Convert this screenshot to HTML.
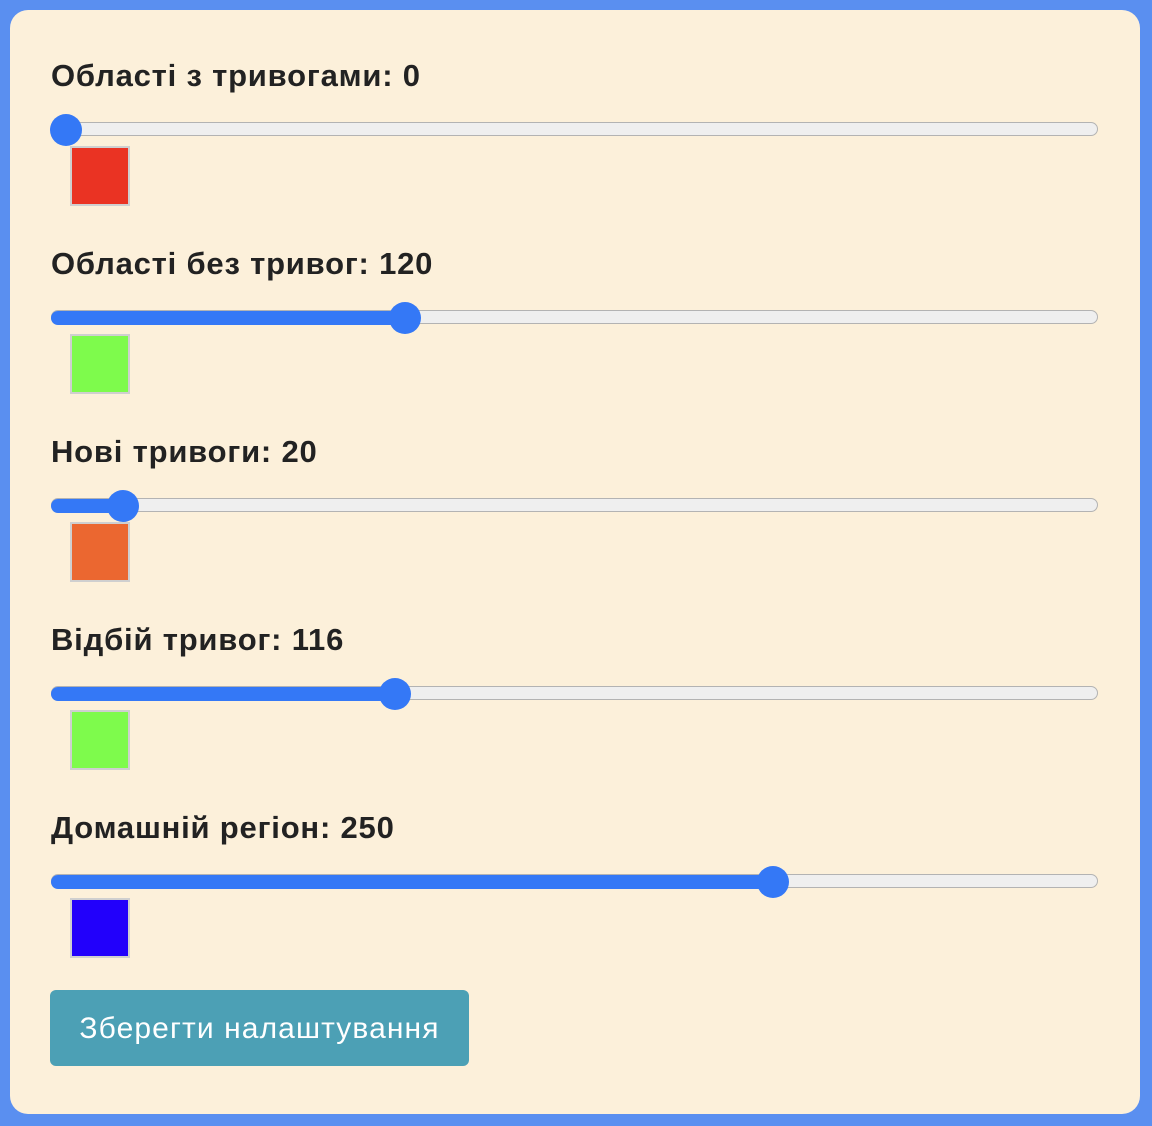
<!DOCTYPE html>
<html><head><meta charset="utf-8"><style>
html,body{margin:0;padding:0}
body{width:1152px;height:1126px;background:#5a8ff0;position:relative;overflow:hidden;font-family:"Liberation Sans","DejaVu Sans",sans-serif}
.card{position:absolute;left:10px;top:10px;width:1130px;height:1104px;background:#fcf0da;border-radius:18px}
.lbl{position:absolute;left:51px;font-size:31px;font-weight:bold;color:#222;line-height:1;letter-spacing:0.8px}
.track{position:absolute;left:51px;width:1045px;height:12px;background:#efefef;border:1px solid #b3b3b3;border-radius:7px}
.fill{position:absolute;left:51px;height:14px;background:#3478f6;border-radius:7px}
.thumb{position:absolute;width:32px;height:32px;border-radius:50%;background:#3478f6}
.sw{position:absolute;left:70px;width:56px;height:56px;border:2px solid #cfcfcf}
.btn{position:absolute;left:50px;top:990px;width:419px;height:76px;background:#4ca0b5;border-radius:6px;color:#fff;font-size:30px;line-height:78px;text-align:center;letter-spacing:1.1px}
</style></head><body><div class="card"></div>

<div class="lbl" style="top:60px">Області з тривогами: 0</div>
<div class="track" style="top:122px"></div>
<div class="thumb" style="left:50px;top:114px"></div>
<div class="sw" style="top:146px;background:#ea3323"></div>

<div class="lbl" style="top:248px">Області без тривог: 120</div>
<div class="track" style="top:310px"></div>
<div class="fill" style="top:311px;width:354px"></div>
<div class="thumb" style="left:389px;top:302px"></div>
<div class="sw" style="top:334px;background:#7efb4c"></div>

<div class="lbl" style="top:436px">Нові тривоги: 20</div>
<div class="track" style="top:498px"></div>
<div class="fill" style="top:499px;width:72px"></div>
<div class="thumb" style="left:107px;top:490px"></div>
<div class="sw" style="top:522px;background:#eb6730"></div>

<div class="lbl" style="top:624px">Відбій тривог: 116</div>
<div class="track" style="top:686px"></div>
<div class="fill" style="top:687px;width:344px"></div>
<div class="thumb" style="left:379px;top:678px"></div>
<div class="sw" style="top:710px;background:#7efb4c"></div>

<div class="lbl" style="top:812px">Домашній регіон: 250</div>
<div class="track" style="top:874px"></div>
<div class="fill" style="top:875px;width:722px"></div>
<div class="thumb" style="left:757px;top:866px"></div>
<div class="sw" style="top:898px;background:#2200fb"></div>

<div class="btn">Зберегти налаштування</div>
</body></html>
